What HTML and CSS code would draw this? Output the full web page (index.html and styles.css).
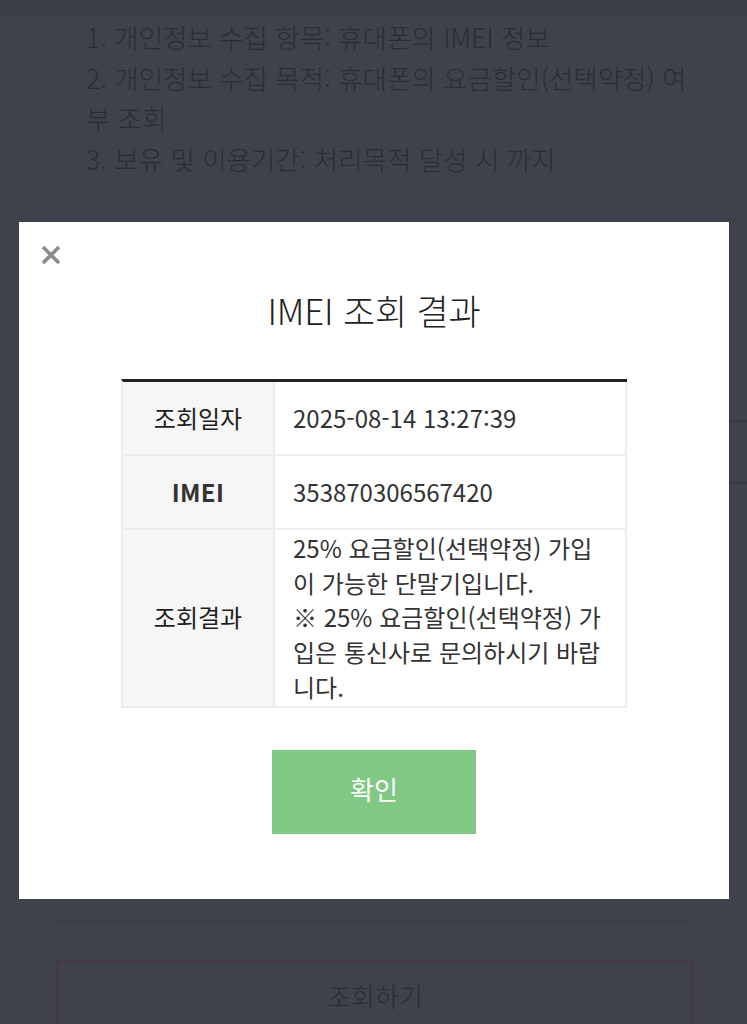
FILE: index.html
```html
<!DOCTYPE html>
<html lang="ko">
<head>
<meta charset="utf-8">
<title>IMEI 조회 결과</title>
<link rel="stylesheet" href="styles.css">
</head>
<body>
<div class="page">
  <div class="topbar"></div>
  <ol class="notice">
    <li>1. 개인정보 수집 항목: 휴대폰의 IMEI 정보</li>
    <li>2. 개인정보 수집 목적: 휴대폰의 요금할인(선택약정) 여부 조회</li>
    <li>3. 보유 및 이용기간: 처리목적 달성 시 까지</li>
  </ol>
  <div class="bg-table">
    <div class="bg-row"></div>
    <div class="bg-row"></div>
    <div class="bg-row last"></div>
  </div>
  <div class="divider"></div>
  <div class="search-btn">조회하기</div>
</div>

<div class="modal">
  <button class="close" aria-label="닫기">
    <svg width="22" height="22" viewBox="0 0 22 22"><path d="M3 3 L19 19 M19 3 L3 19" stroke="#8c8c8c" stroke-width="3.6" stroke-linecap="butt"/></svg>
  </button>
  <h2 class="title">IMEI 조회 결과</h2>
  <div class="result">
    <div class="th">조회일자</div>
    <div class="td">2025-08-14 13:27:39</div>
    <div class="th imei">IMEI</div>
    <div class="td">353870306567420</div>
    <div class="th">조회결과</div>
    <div class="td">25% 요금할인(선택약정) 가입이 가능한 단말기입니다.<br>※ 25% 요금할인(선택약정) 가입은 통신사로 문의하시기 바랍니다.</div>
  </div>
  <button class="ok">확인</button>
</div>
</body>
</html>
```

FILE: styles.css
```css
* { box-sizing: border-box; }
html, body { margin: 0; padding: 0; }
body {
  background: #3f424b;
  font-family: "Noto Sans CJK KR", "Noto Sans", sans-serif;
  width: 747px;
  height: 1024px;
  overflow: hidden;
  position: relative;
}
.page { display: flex; flex-direction: column; }
.topbar { height: 15px; background: #3b3e47; }
.notice {
  list-style: none;
  margin: 2px 53px 0 86px;
  padding: 0;
  font-size: 26.5px;
  line-height: 40.5px;
  font-weight: 300;
  color: #2b2d34;
}
.bg-table { margin: 181px 0 0 300px; }
.bg-row { height: 62px; border-bottom: 2px solid #363941; }
.bg-row.last { border-bottom: none; height: 400px; }
.divider { margin: 37px 57px 0 56px; height: 2px; background: #3a3d45; }
.search-btn {
  margin: 37px 53px 0 56px;
  height: 80px;
  border: 2px solid #4a3840;
  border-bottom: none;
  display: flex;
  justify-content: center;
  align-items: flex-start;
  padding-top: 14px;
  font-size: 26px;
  line-height: 40px;
  font-weight: 300;
  color: #2b2d33;
}

.modal {
  position: absolute;
  top: 222px;
  left: 19px;
  width: 710px;
  height: 677px;
  background: #fff;
  display: flex;
  flex-direction: column;
  align-items: center;
  padding-top: 21px;
}
.close {
  align-self: flex-start;
  margin-left: 20px;
  width: 24px;
  height: 24px;
  padding: 1px;
  border: none;
  background: none;
  display: flex;
}
.title {
  margin: 20px 0 0;
  font-size: 35px;
  line-height: 46px;
  font-weight: 300;
  color: #222;
  letter-spacing: -0.2px;
}
.result {
  margin-top: 46px;
  width: 506px;
  display: grid;
  grid-template-columns: 152px 1fr;
  border-top: 3px solid #222;
  border-left: 2px solid #ececec;
  font-size: 24px;
  color: #333;
}
.th, .td {
  min-height: 74px;
  display: flex;
  align-items: center;
  border-right: 2px solid #ececec;
  border-bottom: 2px solid #ececec;
  line-height: 34.7px;
  padding-top: 1px;
  padding-bottom: 1px;
}
.th {
  background: #f6f6f6;
  justify-content: center;
  font-weight: 400;
  color: #1e1e1e;
}
.th.imei { font-weight: 700; letter-spacing: 0.3px; color: #333; }
.td { padding-left: 18px; padding-right: 20px; background: #fff; }
.ok {
  margin-top: 42px;
  width: 204px;
  height: 84px;
  border: none;
  background: #80c883;
  color: #fff;
  font-family: inherit;
  font-size: 26px;
  padding: 0 0 6px;
}
```
